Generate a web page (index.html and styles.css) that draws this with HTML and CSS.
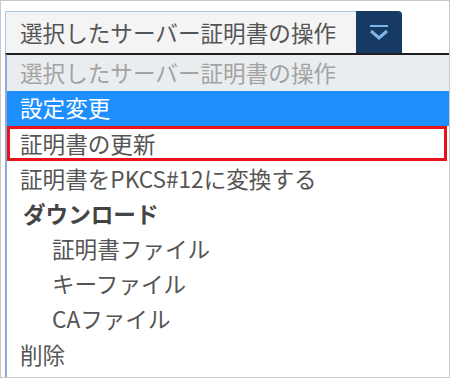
FILE: index.html
```html
<!DOCTYPE html>
<html lang="ja">
<head>
    <meta charset="UTF-8">
    <meta name="viewport" content="width=device-width, initial-scale=1.0">
    <title>サーバー証明書の操作</title>
    <link rel="stylesheet" href="styles.css">
</head>
<body>

    <div class="frame">
        <div class="select-row">
            <div class="select-field">選択したサーバー証明書の操作</div>
            <div class="select-button">
                <svg width="22" height="18" viewBox="0 0 22 18">
                    <path d="M2 2 H20" stroke="#7fb6ea" stroke-width="2" fill="none"/>
                    <path d="M3 7 L11 14 L19 7" stroke="#7fb6ea" stroke-width="3" fill="none" stroke-linejoin="miter"/>
                </svg>
            </div>
        </div>

        <ul class="options">
            <li class="option placeholder">選択したサーバー証明書の操作</li>
            <li class="option active">設定変更</li>
            <li class="option marked">証明書の更新</li>
            <li class="option">証明書をPKCS#12に変換する</li>
            <li class="option group">ダウンロード</li>
            <li class="option child">証明書ファイル</li>
            <li class="option child">キーファイル</li>
            <li class="option child">CAファイル</li>
            <li class="option">削除</li>
        </ul>
    </div>

</body>
</html>
```

FILE: styles.css
```css
body {
    margin: 0;
    padding: 0;
    background-color: #fff;
    font-family: "Noto Sans CJK JP", "Noto Sans", sans-serif;
}

.frame {
    width: 450px;
    height: 378px;
    box-sizing: border-box;
    border: 1px solid #c8c8c8;
    padding: 10px 0 0 4px;
    overflow: hidden;
}

.select-row {
    display: flex;
    height: 42px;
}

.select-field {
    width: 351px;
    box-sizing: border-box;
    background-color: #f4f4f4;
    border-top: 1px solid #a9c4ea;
    border-left: 1px solid #a9c4ea;
    padding-left: 14px;
    font-size: 22.6px;
    line-height: 41px;
    color: #555;
    white-space: nowrap;
}

.select-button {
    width: 46px;
    background-color: #173a64;
    border-top-right-radius: 4px;
    display: flex;
    align-items: center;
    justify-content: center;
}

.select-button svg {
    margin-top: 2px;
}

.options {
    list-style: none;
    margin: 0;
    padding: 0;
    border-top: 2px solid #1f1f1f;
    border-left: 2px solid #8ea9d2;
    height: 330px;
}

.option {
    height: 35.2px;
    line-height: 35.2px;
    box-sizing: border-box;
    padding-left: 13px;
    font-size: 22.6px;
    color: #555;
    white-space: nowrap;
}

.placeholder {
    height: 36px;
    line-height: 36px;
    background-color: #eaedf0;
    color: #a3a3a3;
}

.active {
    height: 34.5px;
    line-height: 34.5px;
    background-color: #1e8fff;
    color: #fff;
}

.marked {
    border: 3px solid #e8121b;
    margin-right: 2px;
    padding-left: 10px;
    line-height: 29px;
}

.group {
    font-weight: bold;
    color: #444;
    padding-left: 16px;
}

.child {
    padding-left: 45px;
}
```
